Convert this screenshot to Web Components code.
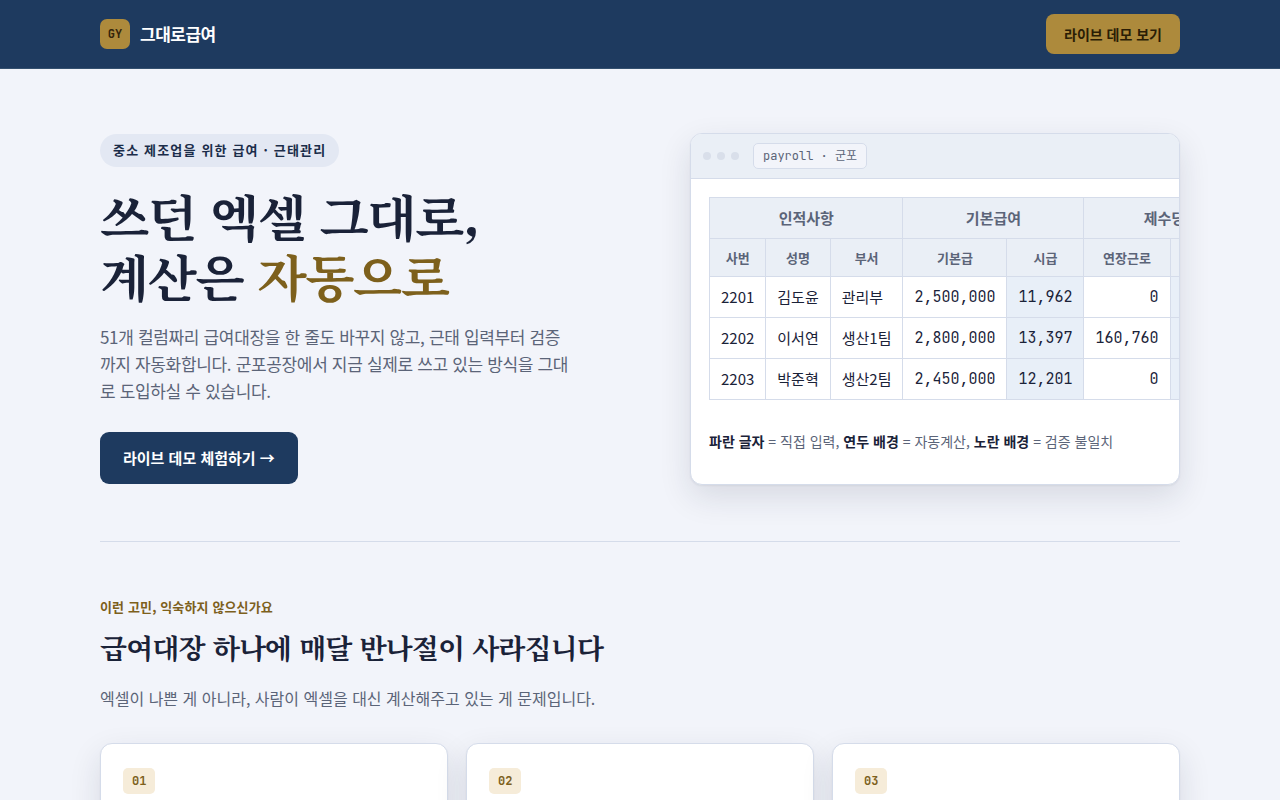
<!DOCTYPE html>
<html lang="ko">
<head>
<meta charset="utf-8">
<meta name="viewport" content="width=device-width, initial-scale=1">
<title>그대로급여</title>
<style>
:root{
  --bg:#f2f4fa;--ink:#1a2238;--muted:#5b6478;--navy:#1e3a5f;--gold:#ad8a3c;--gold-ink:#7d601c;
  --line:#d5dcea;--head:#eaeff6;--sans:"Noto Sans CJK KR",sans-serif;
  --shadow:0 1px 2px rgba(26,34,56,.06),0 12px 32px rgba(26,34,56,.12);
  --serif:"Noto Serif KR","Noto Serif CJK KR","Noto Sans CJK KR",serif;
  --mono:"JetBrains Mono","Liberation Mono","Noto Sans CJK KR",monospace;
}
html,body{margin:0;background:var(--bg)}
body{font:16px/26px var(--sans);color:var(--ink);overflow-x:hidden}
</style>
</head>
<body>
<gy-header></gy-header>
<main>
<gy-hero></gy-hero>
<gy-problems>
  <gy-card>01</gy-card>
  <gy-card>02</gy-card>
  <gy-card>03</gy-card>
</gy-problems>
</main>
<script>
const define = (name, html) => customElements.define(name, class extends HTMLElement {
  constructor() {
    super();
    this.attachShadow({ mode: 'open' }).innerHTML = html;
  }
});

define('gy-header', `
<style>
:host{display:block;background:var(--navy);border-bottom:1px solid #34506f}
.bar{max-width:1080px;margin:0 auto;padding:14px 24px;display:flex;align-items:center;justify-content:space-between}
.brand{display:flex;align-items:center;gap:10px;color:#fff;font-weight:700;font-size:17px;line-height:26px;letter-spacing:-0.03em;text-decoration:none}
.mark{width:30px;height:30px;border-radius:7px;background:var(--gold);color:#33240a;display:grid;place-items:center;font:600 12px/16px var(--mono);letter-spacing:0}
button{font:700 14px/20px var(--sans);color:#2a1d05;background:var(--gold);border:0;border-radius:8px;padding:10px 18px;cursor:pointer}
</style>
<header class="bar">
  <a class="brand" href="#"><span class="mark">GY</span><span>그대로급여</span></a>
  <button type="button">라이브 데모 보기</button>
</header>`);

define('gy-hero', `
<style>
:host{display:block;max-width:1080px;margin:0 auto;padding:0 24px}
.grid{display:grid;grid-template-columns:minmax(0,534fr) minmax(0,490fr);gap:56px;align-items:center;padding:64px 0 56px;border-bottom:1px solid var(--line)}
.tag{display:block;width:fit-content;background:#e3e8f3;border-radius:999px;padding:5px 13px 7px;font-size:13px;line-height:21px;font-weight:700;letter-spacing:0.09em;color:#1b2d4a}
h1{font:700 51px/60px var(--serif);letter-spacing:-0.03em;margin:18px 0}
em{font-style:normal;color:var(--gold-ink)}
p{font-size:17px;line-height:27px;letter-spacing:-0.02em;color:var(--muted);max-width:472px;margin:0 0 28px}
button{font:700 15px/24px var(--sans);color:#fff;background:var(--navy);border:0;border-radius:9px;padding:14px 23px;cursor:pointer;display:block}
</style>
<section class="grid">
  <div>
    <span class="tag">중소 제조업을 위한 급여 · 근태관리</span>
    <h1>쓰던 엑셀 그대로,<br>계산은 <em>자동으로</em></h1>
    <p>51개 컬럼짜리 급여대장을 한 줄도 바꾸지 않고, 근태 입력부터 검증까지 자동화합니다. 군포공장에서 지금 실제로 쓰고 있는 방식을 그대로 도입하실 수 있습니다.</p>
    <button type="button">라이브 데모 체험하기 →</button>
  </div>
  <gy-sheet></gy-sheet>
</section>`);

define('gy-sheet', `
<style>
:host{display:block;background:#fff;border:1px solid var(--line);border-radius:12px;overflow:hidden;box-shadow:var(--shadow)}
.chrome{display:flex;align-items:center;gap:6px;background:var(--head);border-bottom:1px solid var(--line);padding:9px 12px}
i{width:8px;height:8px;border-radius:50%;background:#d9dfea}
.tab{margin-left:8px;font:12px/18px var(--mono);color:var(--muted);background:#f2f4fa;border:1px solid var(--line);border-radius:5px;padding:3px 9px}
.body{padding:18px 18px 30px}
.scroll{overflow:hidden;margin-right:-18px}
table{border-collapse:collapse;font-size:15px;line-height:22px;white-space:nowrap}
th,td{border:1px solid var(--line);padding:9px 11px;text-align:left;font-weight:400}
th{background:var(--head);color:var(--muted);font-weight:700;text-align:center}
.sub th{font-size:13px;line-height:19px}
.sub th:last-child{min-width:52px}
.n{font-family:var(--mono);text-align:right}
.auto{background:#e8eff8}
p{margin:28px 0 0;font-size:14px;line-height:26px;color:var(--muted)}
b{color:var(--ink)}
</style>
<div class="chrome"><i></i><i></i><i></i><span class="tab">payroll · 군포</span></div>
<div class="body">
  <div class="scroll"><table>
    <thead>
      <tr><th colspan="3">인적사항</th><th colspan="2">기본급여</th><th colspan="2">제수당</th></tr>
      <tr class="sub"><th>사번</th><th>성명</th><th>부서</th><th>기본급</th><th>시급</th><th>연장근로</th><th></th></tr>
    </thead>
    <tbody>
      <tr><td>2201</td><td>김도윤</td><td>관리부</td><td class="n">2,500,000</td><td class="n auto">11,962</td><td class="n">0</td><td class="n auto"></td></tr>
      <tr><td>2202</td><td>이서연</td><td>생산1팀</td><td class="n">2,800,000</td><td class="n auto">13,397</td><td class="n">160,760</td><td class="n auto"></td></tr>
      <tr><td>2203</td><td>박준혁</td><td>생산2팀</td><td class="n">2,450,000</td><td class="n auto">12,201</td><td class="n">0</td><td class="n auto"></td></tr>
    </tbody>
  </table></div>
  <p><b>파란 글자</b> = 직접 입력, <b>연두 배경</b> = 자동계산, <b>노란 배경</b> = 검증 불일치</p>
</div>`);

define('gy-problems', `
<style>
:host{display:block;max-width:1080px;margin:0 auto;padding:54px 24px 56px}
.kicker{font-size:13px;line-height:22px;font-weight:700;letter-spacing:0.01em;color:var(--gold-ink);margin:0 0 9px}
h2{font:700 28px/40px var(--serif);letter-spacing:-0.03em;margin:0 0 18px}
.lead{font-size:16px;line-height:26px;color:var(--muted);margin:0 0 32px}
.cards{display:grid;grid-template-columns:repeat(3,minmax(0,1fr));gap:18px}
</style>
<section>
  <p class="kicker">이런 고민, 익숙하지 않으신가요</p>
  <h2>급여대장 하나에 매달 반나절이 사라집니다</h2>
  <p class="lead">엑셀이 나쁜 게 아니라, 사람이 엑셀을 대신 계산해주고 있는 게 문제입니다.</p>
  <div class="cards"><slot></slot></div>
</section>`);

define('gy-card', `
<style>
:host{display:block;background:#fff;border:1px solid var(--line);border-radius:12px;padding:24px 22px 120px;box-shadow:var(--shadow)}
.num{display:block;width:fit-content;font:600 12px/18px var(--mono);color:var(--gold-ink);background:#f6ecd9;border-radius:5px;padding:4px 9px}
</style>
<span class="num"><slot></slot></span>`);
</script>
</body>
</html>
